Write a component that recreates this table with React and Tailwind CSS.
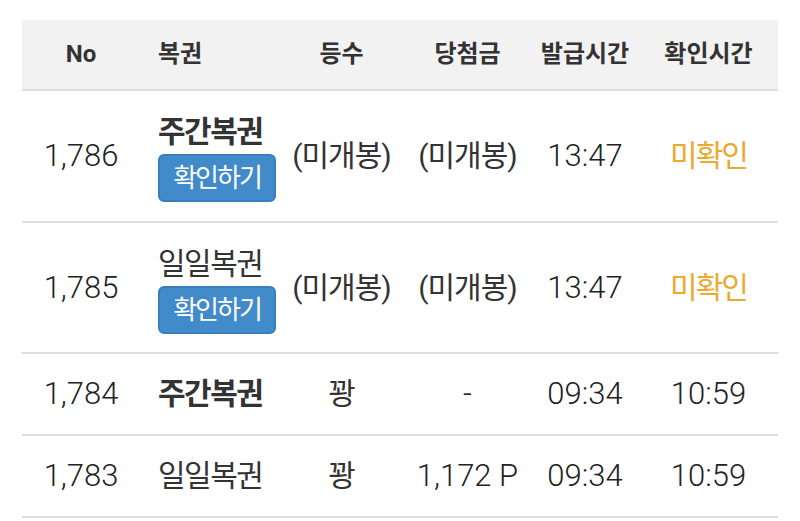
import React from "react";

const rows = [
  { no: "1,786", name: "주간복권", bold: true, btn: true, rank: "(미개봉)", prize: "(미개봉)", issued: "13:47", checked: "미확인" },
  { no: "1,785", name: "일일복권", bold: false, btn: true, rank: "(미개봉)", prize: "(미개봉)", issued: "13:47", checked: "미확인" },
  { no: "1,784", name: "주간복권", bold: true, btn: false, rank: "꽝", prize: "-", issued: "09:34", checked: "10:59" },
  { no: "1,783", name: "일일복권", bold: false, btn: false, rank: "꽝", prize: "1,172 P", issued: "09:34", checked: "10:59" },
];

export default function App() {
  return (
    <div className="w-[800px] h-[521px] bg-white pt-[20px] px-[22px] overflow-hidden text-[#333]" style={{ fontFamily: 'Roboto, "Noto Sans CJK KR", sans-serif' }}>
      <table className="w-[756px] table-fixed border-collapse">
        <colgroup>
          <col className="w-[118px]" />
          <col className="w-[139px]" />
          <col className="w-[125px]" />
          <col className="w-[127px]" />
          <col className="w-[108px]" />
          <col className="w-[139px]" />
        </colgroup>
        <thead>
          <tr className="bg-[#f2f2f2] h-[70px] text-[24px] font-bold leading-[35px] border-b-2 border-[#dddddd]">
            <th className="text-center px-[8px]">No</th>
            <th className="text-left px-[18px]">복권</th>
            <th className="text-center px-[8px]">등수</th>
            <th className="text-center px-[8px]">당첨금</th>
            <th className="text-center px-[4px]">발급시간</th>
            <th className="text-center px-[8px]">확인시간</th>
          </tr>
        </thead>
        <tbody className="text-[31px] leading-[44px] font-light text-[#222]">
          {rows.map((r, i) => (
            <tr key={i} className={`border-b-2 border-[#dddddd] ${r.btn ? (i === 0 ? "h-[132px]" : "h-[131px]") : "h-[82px]"}`}>
              <td className="text-center align-middle whitespace-nowrap">{r.no}</td>
              <td className="text-left align-middle pl-[18px] pr-0 whitespace-nowrap text-[#333]">
                <div className={`text-[30px] tracking-[-1.5px] ${r.bold ? "font-bold" : "font-normal"}`}>{r.name}</div>
                {r.btn && (
                  <div className="inline-flex items-center justify-center h-[48px] w-[118px] rounded-[6px] bg-[#428bca] border-2 border-[#3a7fbd] text-white text-[26px] font-normal tracking-[-2px] leading-[40px]">
                    확인하기
                  </div>
                )}
              </td>
              <td className="text-center align-middle whitespace-nowrap text-[30px] font-normal tracking-[-1px] text-[#333]">{r.rank}</td>
              <td className="text-center align-middle whitespace-nowrap">{r.prize.startsWith("(") ? <span className="text-[30px] font-normal tracking-[-1px] text-[#333]">{r.prize}</span> : r.prize}</td>
              <td className="text-center align-middle whitespace-nowrap">{r.issued}</td>
              <td className={`text-center align-middle whitespace-nowrap ${r.checked === "미확인" ? "text-[#eba92f] text-[30px] font-normal tracking-[-2px]" : ""}`}>{r.checked}</td>
            </tr>
          ))}
        </tbody>
      </table>
    </div>
  );
}
